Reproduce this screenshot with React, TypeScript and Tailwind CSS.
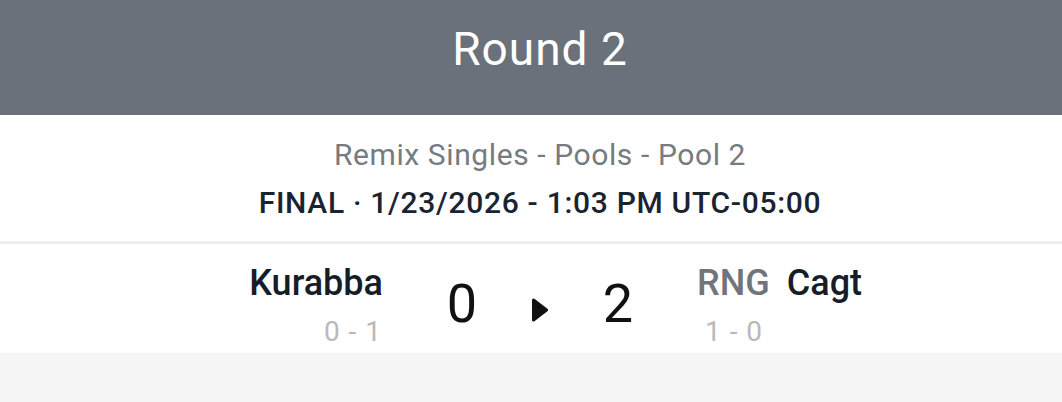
import React from 'react';

const font = { fontFamily: 'Roboto, "Noto Sans", sans-serif' };

const App: React.FC = () => {
  return (
    <div className="w-[1062px] h-[402px] bg-[#f5f5f5]" style={font}>
      {/* round header */}
      <div className="h-[115px] bg-[#6b717a] pt-[26px] pl-[18px] text-center">
        <h1 className="text-white text-[46px] leading-none tracking-[1px]">Round 2</h1>
      </div>

      {/* event info */}
      <div className="bg-white pt-[22px] pb-[20px] pl-[18px] text-center">
        <div className="text-[30px] leading-[36px] tracking-[0.6px] text-[#767b82]">Remix Singles - Pools - Pool 2</div>
        <div className="mt-[12px] text-[30px] leading-[36px] tracking-[0.7px] font-medium text-[#1a2330]">
          FINAL · 1/23/2026 - 1:03 PM UTC-05:00
        </div>
      </div>

      <div className="h-[3px] bg-[#eeeeee]" />

      {/* match row */}
      <div className="bg-white h-[109px] flex items-start pl-[18px]">
        <div className="flex-1 flex flex-col items-end pt-[19px]">
          <div className="text-[36px] leading-[40px] font-medium text-[#151d29]">Kurabba</div>
          <div className="mt-[13px] text-[28px] leading-[32px] tracking-[1px] text-[#b9b9b9] pr-[1px]">0 - 1</div>
        </div>

        <div className="w-[314px] flex items-start justify-center gap-[22px] text-[#111111]">
          <div className="w-[56px] pt-[33px] text-center text-[54px] leading-none">0</div>
          <div className="w-[56px] pt-[54px] flex justify-center">
            <svg width="18" height="24" viewBox="0 0 18 24">
              <path d="M2.5 2 L15.5 12 L2.5 22 Z" fill="#111111" stroke="#111111" strokeWidth="3" strokeLinejoin="round" />
            </svg>
          </div>
          <div className="w-[56px] pt-[33px] text-center text-[54px] leading-none">2</div>
        </div>

        <div className="flex-1 flex flex-col items-start pt-[19px]">
          <div className="flex gap-[17px] text-[36px] leading-[40px] font-medium">
            <span className="text-[#70757c]">RNG</span>
            <span className="text-[#151d29]">Cagt</span>
          </div>
          <div className="mt-[13px] text-[28px] leading-[32px] tracking-[1px] text-[#b9b9b9] pl-[8px]">1 - 0</div>
        </div>
      </div>
    </div>
  );
};

export default App;
